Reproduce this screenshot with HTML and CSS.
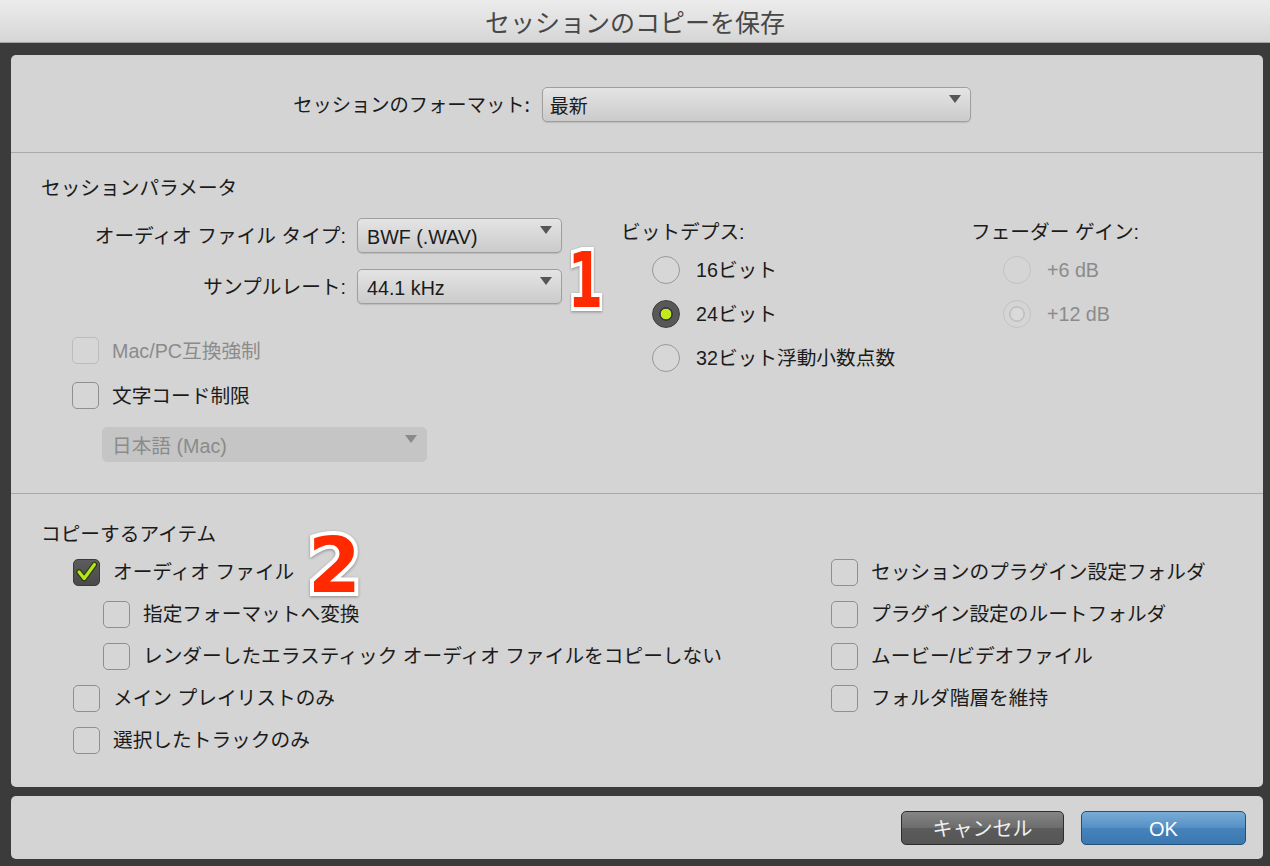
FILE: index.html
```html
<!DOCTYPE html>
<html lang="ja">
<head>
<meta charset="utf-8">
<title>セッションのコピーを保存</title>
<link rel="stylesheet" href="styles.css">
</head>
<body>
<div class="titlebar">セッションのコピーを保存</div>

<div class="panel main">
  <div class="format-row">
    <span class="format-label">セッションのフォーマット:</span>
    <div class="select select-format"><span class="select-text cjk">最新</span><svg class="arrow" width="12" height="8" viewBox="0 0 12 8"><path d="M0 0H12L6 8Z"/></svg></div>
  </div>

  <div class="divider"></div>

  <section class="params">
    <h2 class="section-title">セッションパラメータ</h2>
    <div class="params-body">
      <div class="params-left">
        <div class="form-grid">
          <span class="form-label">オーディオ ファイル タイプ:</span>
          <div class="select"><span class="select-text">BWF (.WAV)</span><svg class="arrow" width="12" height="8" viewBox="0 0 12 8"><path d="M0 0H12L6 8Z"/></svg></div>
          <span class="form-label">サンプルレート:</span>
          <div class="select"><span class="select-text">44.1 kHz</span><svg class="arrow" width="12" height="8" viewBox="0 0 12 8"><path d="M0 0H12L6 8Z"/></svg></div>
        </div>
        <div class="checks">
          <label class="check-row disabled"><span class="box"></span><span>Mac/PC互換強制</span></label>
          <label class="check-row"><span class="box"></span><span>文字コード制限</span></label>
        </div>
        <div class="select select-enc disabled"><span class="select-text">日本語 (Mac)</span><svg class="arrow" width="12" height="8" viewBox="0 0 12 8"><path d="M0 0H12L6 8Z"/></svg></div>
      </div>

      <div class="radio-group bit-depth">
        <div class="group-title">ビットデプス:</div>
        <label class="radio-row"><span class="radio"></span><span>16ビット</span></label>
        <label class="radio-row"><span class="radio on"></span><span>24ビット</span></label>
        <label class="radio-row"><span class="radio"></span><span>32ビット浮動小数点数</span></label>
      </div>

      <div class="radio-group fader">
        <div class="group-title">フェーダー ゲイン:</div>
        <label class="radio-row disabled"><span class="radio"></span><span>+6 dB</span></label>
        <label class="radio-row disabled"><span class="radio on"></span><span>+12 dB</span></label>
      </div>
    </div>
    <span class="badge badge-1">1</span>
  </section>

  <div class="divider"></div>

  <section class="copy">
    <h2 class="section-title">コピーするアイテム</h2>
    <div class="copy-body">
      <div class="copy-col">
        <label class="item"><span class="box checked"><svg width="27" height="27" viewBox="0 0 27 27"><path d="M5.5 13 L11 20 L22 5" fill="none" stroke="#2c3a05" stroke-width="6" stroke-linecap="round" stroke-linejoin="round"/><path d="M5.5 13 L11 20 L22 5" fill="none" stroke="#b4e61c" stroke-width="3.6" stroke-linecap="round" stroke-linejoin="round"/></svg></span><span>オーディオ ファイル</span></label>
        <label class="item indent"><span class="box"></span><span>指定フォーマットへ変換</span></label>
        <label class="item indent"><span class="box"></span><span>レンダーしたエラスティック オーディオ ファイルをコピーしない</span></label>
        <label class="item"><span class="box"></span><span>メイン プレイリストのみ</span></label>
        <label class="item"><span class="box"></span><span>選択したトラックのみ</span></label>
      </div>
      <div class="copy-col">
        <label class="item"><span class="box"></span><span>セッションのプラグイン設定フォルダ</span></label>
        <label class="item"><span class="box"></span><span>プラグイン設定のルートフォルダ</span></label>
        <label class="item"><span class="box"></span><span>ムービー/ビデオファイル</span></label>
        <label class="item"><span class="box"></span><span>フォルダ階層を維持</span></label>
      </div>
    </div>
    <span class="badge badge-2">2</span>
  </section>
</div>

<div class="panel footer">
  <button class="btn btn-cancel">キャンセル</button>
  <button class="btn btn-ok">OK</button>
</div>
</body>
</html>
```

FILE: styles.css
```css
* { box-sizing: border-box; }

html, body {
  margin: 0;
  padding: 0;
}

body {
  width: 1270px;
  height: 866px;
  overflow: hidden;
  background: #3b3b3b;
  font-family: "Liberation Sans", "Noto Sans CJK JP", sans-serif;
  font-size: 19.7px;
  color: #1b1b1b;
}

.titlebar {
  height: 43px;
  border-bottom: 1px solid #a4a4a4;
  background: linear-gradient(#ececec, #d6d6d6);
  text-align: center;
  font-family: "Noto Sans CJK JP", sans-serif;
  font-size: 25px;
  line-height: 42px;
  color: #474747;
}

.panel {
  margin-left: 11px;
  margin-right: 7px;
  background: #d4d4d4;
  border-radius: 5px;
}

.main {
  margin-top: 12px;
  height: 732px;
}

.format-row {
  height: 97px;
  display: flex;
  align-items: center;
  justify-content: center;
  gap: 12px;
  padding-right: 10px;
  padding-top: 1px;
}

.format-label {
  font-family: "Noto Sans CJK JP", sans-serif;
  font-size: 19.3px;
  line-height: 26px;
}

.divider {
  height: 1px;
  background: #a9a9a9;
}

.select {
  height: 35px;
  border: 1px solid #9f9f9f;
  border-radius: 5px;
  background: linear-gradient(#e4e4e4, #cbcbcb);
  display: flex;
  align-items: center;
  padding-left: 9px;
  box-shadow: 0 1px 1px rgba(0,0,0,0.12);
}

.select-text {
  line-height: 26px;
  padding-top: 2px;
}

.select-text.cjk {
  font-family: "Noto Sans CJK JP", sans-serif;
  font-size: 19px;
}

.arrow {
  margin-left: auto;
  margin-right: 9px;
  align-self: flex-start;
  margin-top: 7px;
  fill: #565656;
}

.select-format {
  width: 429px;
  padding-left: 7px;
}

.params {
  position: relative;
  height: 340px;
  padding: 22px 0 0 30px;
}

.section-title {
  margin: 0;
  font-weight: normal;
  font-size: 19.7px;
  line-height: 26px;
  height: 26px;
}

.params-body {
  margin-top: 17px;
  display: grid;
  grid-template-columns: 580px 350px 1fr;
}

.form-grid {
  display: grid;
  grid-template-columns: 305px 205px;
  column-gap: 11px;
  row-gap: 16px;
  align-items: center;
}

.form-grid .select {
  height: 35px;
}

.form-label {
  justify-self: end;
  line-height: 26px;
}

.checks {
  margin-top: 24px;
  padding-left: 31px;
}

.check-row {
  height: 45px;
  display: flex;
  align-items: center;
  gap: 13px;
  line-height: 26px;
}

.box {
  flex: none;
  width: 27px;
  height: 27px;
  border: 1.5px solid #8f8f8f;
  border-radius: 5px;
  background: #d6d6d6;
  display: flex;
  align-items: center;
  justify-content: center;
}

.box svg { display: block; }

.box.checked {
  background: linear-gradient(#5c5c5c, #4a4a4a);
  border-color: #3a3a3a;
}

.disabled { color: #8b8b8b; }

.disabled .box {
  border-color: #bcbcbc;
}

.select-enc {
  margin-top: 9px;
  margin-left: 61px;
  width: 325px;
  background: #c5c5c5;
  border-color: #c5c5c5;
  box-shadow: none;
}

.select-enc .arrow { fill: #8a8a8a; }

.group-title {
  height: 30px;
  line-height: 28px;
}

.radio-row {
  height: 44px;
  display: flex;
  align-items: center;
  gap: 16px;
  padding-left: 31px;
  line-height: 26px;
}

.fader .radio-row { padding-left: 32px; }

.radio {
  flex: none;
  width: 28px;
  height: 28px;
  border-radius: 50%;
  border: 1.5px solid #999;
  background: #d7d7d7;
}

.radio.on {
  border-color: #3e3e3e;
  background: radial-gradient(circle, #c2ea1c 0 5px, #3b3b3b 5.6px 6.6px, #585858 7.2px);
}

.radio-row.disabled .radio {
  border-color: #c3c3c3;
  background: #d5d5d5;
}

.radio-row.disabled .radio.on {
  background: radial-gradient(circle, #dadada 0 6px, #c1c1c1 6.6px 7.6px, #d5d5d5 8.2px);
}

.copy {
  position: relative;
  height: 293px;
  padding: 27px 0 0 30px;
}

.copy-body {
  margin-top: 4px;
  padding-left: 32px;
  display: grid;
  grid-template-columns: 758px 1fr;
}

.item {
  height: 42px;
  display: flex;
  align-items: center;
  gap: 13px;
  line-height: 26px;
}

.item.indent { padding-left: 30px; }

.badge {
  position: absolute;
  font-family: "DejaVu Sans", sans-serif;
  font-weight: bold;
  font-size: 76px;
  line-height: 1;
  color: #ff2a00;
  -webkit-text-stroke: 8px #ffffff;
  paint-order: stroke fill;
  filter: drop-shadow(0 1px 1.5px rgba(0,0,0,0.35));
}

.badge-1 {
  left: 548px;
  top: 90px;
  transform: scaleX(0.66);
}

.badge-2 {
  left: 297px;
  top: 34px;
}

.footer {
  margin-top: 9px;
  height: 63px;
  display: flex;
  align-items: center;
  justify-content: flex-end;
  gap: 17px;
  padding-right: 17px;
  padding-top: 1px;
}

.btn {
  height: 34px;
  border-radius: 5px;
  font-family: "Liberation Sans", "Noto Sans CJK JP", sans-serif;
  font-size: 20px;
  line-height: 26px;
  padding: 2px 0 0;
  cursor: default;
}

.btn-cancel {
  width: 163px;
  border: 1px solid #2e2e2e;
  background: linear-gradient(#858585, #6c6c6c 50%, #5b5b5b 51%, #555555);
  color: #efefef;
}

.btn-ok {
  width: 165px;
  border: 1px solid #234f78;
  background: linear-gradient(#78acd6, #5590c4 50%, #4682bb 51%, #3c78b0);
  color: #ffffff;
}
```
